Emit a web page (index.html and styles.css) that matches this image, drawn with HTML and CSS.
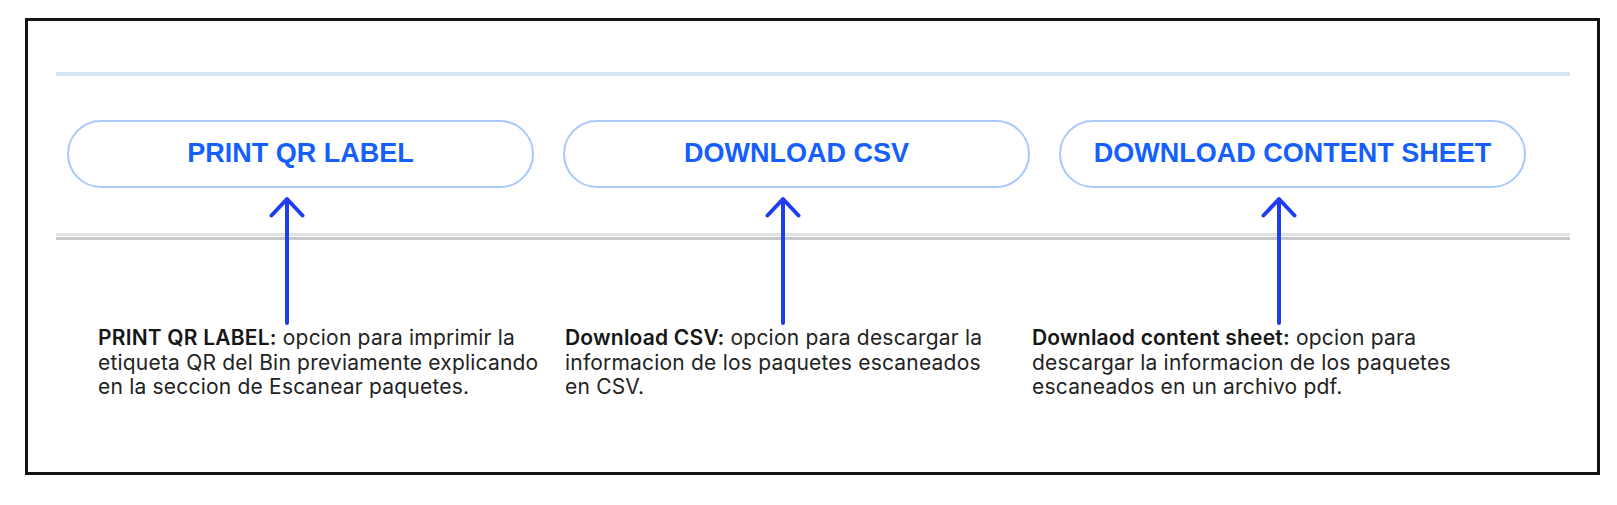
FILE: index.html
```html
<!DOCTYPE html>
<html lang="es">
<head>
<meta charset="utf-8">
<title>Opciones del Bin</title>
<link rel="stylesheet" href="styles.css">
</head>
<body>
<div class="frame">
  <div class="rule-blue"></div>
  <div class="actions">
    <button class="pill">PRINT QR LABEL</button>
    <button class="pill">DOWNLOAD CSV</button>
    <button class="pill">DOWNLOAD CONTENT SHEET</button>
  </div>
  <div class="rule-gray"></div>
  <div class="arrows">
    <div class="arrow-cell"><svg class="arrow" viewBox="0 0 40 130" width="40" height="130"><path d="M20 3V127M4.5 19.5L20 3L35.5 19.5"/></svg></div>
    <div class="arrow-cell"><svg class="arrow" viewBox="0 0 40 130" width="40" height="130"><path d="M20 3V127M4.5 19.5L20 3L35.5 19.5"/></svg></div>
    <div class="arrow-cell"><svg class="arrow" viewBox="0 0 40 130" width="40" height="130"><path d="M20 3V127M4.5 19.5L20 3L35.5 19.5"/></svg></div>
  </div>
  <div class="notes">
    <p class="note"><strong>PRINT QR LABEL:</strong> opcion para imprimir la<br>etiqueta QR del Bin previamente explicando<br>en la seccion de Escanear paquetes.</p>
    <p class="note"><strong>Download CSV:</strong> opcion para descargar la<br>informacion de los paquetes escaneados<br>en CSV.</p>
    <p class="note"><strong>Downlaod content sheet:</strong> opcion para<br>descargar la informacion de los paquetes<br>escaneados en un archivo pdf.</p>
  </div>
</div>
</body>
</html>
```

FILE: styles.css
```css
html, body {
  margin: 0;
  padding: 0;
  background: #ffffff;
}

body {
  padding: 18px 0 0 25px;
  font-family: Inter, "Liberation Sans", sans-serif;
}

.frame {
  box-sizing: border-box;
  width: 1575px;
  height: 457px;
  border: 3px solid #141414;
  background: #ffffff;
}

.rule-blue {
  margin: 51px 0 0 28px;
  width: 1514px;
  height: 4px;
  background: #d4e6f4;
}

.actions {
  display: grid;
  grid-template-columns: repeat(3, 467px);
  column-gap: 29px;
  margin-top: 44px;
  padding-left: 39px;
}

.pill {
  box-sizing: border-box;
  height: 68px;
  border: 2px solid #a9c9fd;
  border-radius: 34px;
  background: #ffffff;
  color: #145ffd;
  font-family: "Liberation Sans", Arial, sans-serif;
  font-weight: 700;
  font-size: 27px;
  padding: 0 0 2px;
  margin: 0;
}

.rule-gray {
  margin: 45px 0 0 28px;
  width: 1514px;
  height: 1px;
  border-top: 3px solid #e3e3e3;
  border-bottom: 3px solid #c8c8c8;
}

.arrows {
  display: grid;
  grid-template-columns: repeat(3, 467px);
  column-gap: 29px;
  margin-top: -44px;
  padding-left: 39px;
  height: 130px;
}

.arrow-cell {
  padding-left: 200px;
  line-height: 0;
}

.arrow {
  display: block;
  fill: none;
  stroke: #1e3ef0;
  stroke-width: 4;
  stroke-linecap: round;
  stroke-linejoin: round;
}

.notes {
  display: grid;
  grid-template-columns: repeat(3, 467px);
  margin-top: 0;
  padding-left: 70px;
}

.note {
  margin: 0;
  font-size: 21px;
  line-height: 24.5px;
  letter-spacing: 0.2px;
  color: #232323;
  white-space: nowrap;
}

.note strong {
  font-weight: 600;
  color: #161616;
}
```
